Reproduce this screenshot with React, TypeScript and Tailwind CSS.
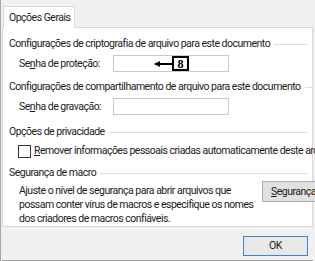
import React from "react";

function GroupHeader({ children, top }: { children: React.ReactNode; top: string }) {
  return (
    <div className={`flex items-center gap-[4px] pl-[6px] pr-[4px] ${top}`}>
      <span className="whitespace-nowrap">{children}</span>
      <div className="h-px min-w-[8px] flex-1 bg-[#dcdcdc]" />
    </div>
  );
}

export default function App() {
  return (
    <div
      className="relative w-[315px] h-[261px] overflow-hidden bg-[#f0f0f0] text-[10.5px] leading-[14px] tracking-[-0.5px] text-[#1a1a1a]"
      style={{ fontFamily: 'Roboto, "Noto Sans", sans-serif' }}
    >
      <div className="flex h-full flex-col border-l border-[#a8a8a8] pl-[1px] pr-[2px]">
        {/* tab strip */}
        <div className="flex h-[27px] items-end pl-[1px]">
          <div className="relative z-10 mb-[-1px] flex h-[22px] w-[72px] items-center whitespace-nowrap border border-b-0 border-[#d9d9d9] bg-white pl-[5px]">
            Opções Gerais
          </div>
        </div>
        {/* panel */}
        <div className="flex h-[200px] flex-col border border-[#d9d9d9] bg-white">
          <GroupHeader top="mt-[9px]">Configurações de criptografia de arquivo para este documento</GroupHeader>
          <div className="mt-[4px] flex items-center pl-[16px]">
            <span className="w-[94px] whitespace-nowrap">
              Se<span className="underline">n</span>ha de proteção:
            </span>
            <div className="relative h-[17px] w-[116px] border border-[#c8c8c8] bg-white">
              <div className="absolute left-[41px] top-[7px] h-[2px] w-[17px] bg-black" />
              <div className="absolute left-[40px] top-[5px] h-0 w-0 border-y-[3px] border-r-[6px] border-y-transparent border-r-black" />
              <div
                className="absolute left-[58px] top-0 flex h-[15px] w-[17px] items-center justify-center border-2 border-black text-[12px] font-bold leading-none tracking-normal text-black"
                style={{ fontFamily: '"Liberation Serif", serif' }}
              >
                8
              </div>
            </div>
          </div>
          <GroupHeader top="mt-[8px]">Configurações de compartilhamento de arquivo para este documento</GroupHeader>
          <div className="mt-[4px] flex items-center pl-[16px]">
            <span className="w-[94px] whitespace-nowrap">
              Se<span className="underline">n</span>ha de gravação:
            </span>
            <div className="h-[17px] w-[116px] border border-[#c8c8c8] bg-white" />
          </div>
          <GroupHeader top="mt-[10px]">Opções de privacidade</GroupHeader>
          <div className="mt-[5px] flex items-center pl-[15px]">
            <div className="h-[13px] w-[13px] shrink-0 border border-[#333333] bg-white" />
            <span className="ml-[3px] whitespace-nowrap">
              <span className="underline">R</span>emover informações pessoais criadas automaticamente deste arquivo ao salvar
            </span>
          </div>
          <GroupHeader top="mt-[8px]">Segurança de macro</GroupHeader>
          <div className="mt-[4px] flex items-start pl-[16px]">
            <p className="w-[240px] shrink-0 whitespace-nowrap leading-[14px]">
              Ajuste o nível de segurança para abrir arquivos que
              <br />
              possam conter vírus de macros e especifique os nomes
              <br />
              dos criadores de macros confiáveis.
            </p>
            <div className="ml-[3px] mt-[-3px] flex h-[21px] w-[75px] shrink-0 items-center border border-[#adadad] bg-[#e1e1e1] pl-[8px]">
              <span className="whitespace-nowrap">
                <span className="underline">S</span>egurança de Macro...
              </span>
            </div>
          </div>
        </div>
        {/* footer */}
        <div className="flex flex-1 items-start justify-end border-b border-[#a0a0a0] pr-[5px] pt-[9px]">
          <div className="flex h-[20px] w-[65px] items-center justify-center border border-[#3b86d0] bg-[#e8e8e8]">
            OK
          </div>
        </div>
      </div>
    </div>
  );
}
